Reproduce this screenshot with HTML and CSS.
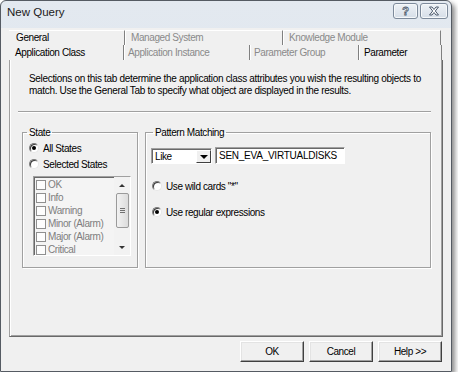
FILE: index.html
```html
<!DOCTYPE html>
<html lang="en">
<head>
	<meta charset="UTF-8">
	<title>New Query</title>
	<link rel="stylesheet" href="styles.css">
</head>
<body>
	<div class="window">
		<div class="titlebar">
			<span class="title">New Query</span>
			<div class="capbtns">
				<span class="capbtn help">?</span>
				<span class="capbtn close">
					<svg width="12" height="10" viewBox="0 0 12 10"><path d="M1.5 1 L4 1 L6 3.5 L8 1 L10.5 1 L7.3 5 L10.5 9 L8 9 L6 6.5 L4 9 L1.5 9 L4.7 5 Z" fill="#fff" stroke="#4d5b6e" stroke-width="1" stroke-linejoin="round"/></svg>
				</span>
			</div>
		</div>
		<div class="client">
			<div class="tabs">
				<div class="tabrow">
					<span class="tab first" style="width:115px">General</span>
					<span class="tab off" style="width:158px">Managed System</span>
					<span class="tab off last" style="width:159px">Knowledge Module</span>
				</div>
				<div class="tabrow row2">
					<span class="tab first" style="width:114px">Application Class</span>
					<span class="tab off" style="width:126px">Application Instance</span>
					<span class="tab off" style="width:109px">Parameter Group</span>
					<span class="tab last" style="width:84px">Parameter</span>
				</div>
			</div>
			<div class="panel">
				<p class="intro">Selections on this tab determine the application class attributes you wish the resulting objects to<br>match. Use the General Tab to specify what object are displayed in the results.</p>
				<div class="sep"></div>
				<div class="groups">
					<fieldset class="group state">
						<legend>State</legend>
						<div class="opt first"><span class="radio on"></span>All States</div>
						<div class="opt"><span class="radio"></span>Selected States</div>
						<div class="listbox">
							<div class="items">
								<div class="item"><span class="chk"></span>OK</div>
								<div class="item"><span class="chk"></span>Info</div>
								<div class="item"><span class="chk"></span>Warning</div>
								<div class="item"><span class="chk"></span>Minor (Alarm)</div>
								<div class="item"><span class="chk"></span>Major (Alarm)</div>
								<div class="item"><span class="chk"></span>Critical</div>
							</div>
							<div class="scroll">
								<span class="arrow up"></span>
								<span class="thumb"><i></i><i></i><i></i></span>
								<span class="track"></span>
								<span class="arrow down"></span>
							</div>
						</div>
					</fieldset>
					<fieldset class="group pattern">
						<legend>Pattern Matching</legend>
						<div class="matchrow">
							<div class="select"><span class="val">Like</span><span class="drop"></span></div>
							<div class="textbox">SEN_EVA_VIRTUALDISKS</div>
						</div>
						<div class="opt wild"><span class="radio"></span>Use wild cards "*"</div>
						<div class="opt regex"><span class="radio on"></span>Use regular expressions</div>
					</fieldset>
				</div>
			</div>
			<div class="buttons">
				<span class="btn">OK</span>
				<span class="btn">Cancel</span>
				<span class="btn">Help &gt;&gt;</span>
			</div>
		</div>
	</div>
</body>
</html>
```

FILE: styles.css
```css
body{margin: 0;background: #fff;font-family: "Liberation Sans", Arial, sans-serif;font-size: 10px;letter-spacing: -0.4px;color: #000;}

.window{width: 450px;height: 370px;border: 1px solid #555b63;border-radius: 6px 6px 0 0;
	background: linear-gradient(#e3e9f0, #d9e1ea);
	box-shadow: 3px 3px 5px rgba(0,0,0,.45);
	display: flex;flex-direction: column;}

.titlebar{height: 27px;display: flex;align-items: flex-start;padding-left: 6px;}
.titlebar .title{font-size: 11.5px;letter-spacing: 0;line-height: 14px;margin-top: 4px;color: #1b1b1b;}
.capbtns{margin-left: auto;margin-top: 2px;margin-right: 3px;display: flex;gap: 2px;}
.capbtn{height: 14px;border: 1px solid #7d8a9b;border-radius: 3px;
	background: linear-gradient(#eef2f6, #d6dee8);
	display: flex;align-items: center;justify-content: center;box-shadow: inset 0 0 0 1px #f6f8fa;}
.capbtn.help{width: 23px;font-weight: bold;font-size: 11px;letter-spacing: 0;color: #fff;
	-webkit-text-stroke: 0.8px #4d5b6e;}
.capbtn.close{width: 26px;}

.client{flex: 1;background: #f0f0f0;padding: 2px 8px 0 8px;display: flex;flex-direction: column;}

.tabs{height: 30px;}
.tabrow{height: 15px;display: flex;}
.tab{height: 15px;line-height: 15px;box-sizing: border-box;padding-left: 6px;border-left: 1px solid #808080;
	box-shadow: inset 1px 0 #fff;white-space: nowrap;overflow: hidden;}
.tab.first{border-left: none;box-shadow: none;padding-left: 7px;}
.tab.last{border-right: 1px solid #808080;}
.tab.off{color: #8a8a8a;}
.tabrow:first-child .tab{border-top: 1px solid #fff;line-height: 14px;}
.row2 .tab{padding-left: 4px;line-height: 16px;}
.row2 .tab.first{padding-left: 6px;}
.row2 .tab.last{padding-left: 5px;}

.panel{height: 277px;box-sizing: border-box;border-left: 1px solid #a0a0a0;border-right: 1px solid #696969;
	border-bottom: 1px solid #696969;box-shadow: inset 1px 0 #fff, inset -1px -1px #a0a0a0;
	padding: 13px 11px 0 19px;}
.intro{margin: 0;line-height: 12px;letter-spacing: -0.32px;white-space: nowrap;}
.sep{height: 0;border-top: 1px solid #a0a0a0;border-bottom: 1px solid #fff;margin: 14px 0 0 -11px;}

.groups{display: flex;gap: 7px;height: 142px;margin: 13px 0 0 -7px;}
.group{margin: 0;padding: 0;border: 1px solid #a0a0a0;box-shadow: inset 1px 1px #fff, 1px 1px #fff;min-width: 0;}
.group legend{padding: 0 2px;margin-left: 4px;line-height: 13px;}
.state{width: 116px;box-sizing: border-box;flex: none;}
.pattern{flex: 1;}
.pattern legend{margin-left: 7px;}

.opt{height: 16px;display: flex;align-items: center;padding-left: 6px;}
.state .opt.first{margin-top: 1px;}
.radio{width: 10px;height: 10px;box-sizing: border-box;border-radius: 50%;margin-right: 4px;
	border: 1px solid;border-color: #7a7a7a #e6e6e6 #e6e6e6 #7a7a7a;background: #fff;
	box-shadow: inset 1px 1px #3c3c3c;display: flex;align-items: center;justify-content: center;}
.radio.on::after{content: "";width: 4px;height: 4px;border-radius: 50%;background: #000;}

.listbox{margin: 4px 0 0 10px;width: 98px;height: 80px;box-sizing: border-box;display: flex;
	border: 1px solid;border-color: #a0a0a0 #fff #fff #a0a0a0;box-shadow: inset 1px 1px #696969;
	background: #f4f4f4;overflow: hidden;}
.items{flex: 1;padding: 1px 0 0 2px;color: #7e7e7e;}
.item{height: 13px;display: flex;align-items: center;white-space: nowrap;}
.chk{width: 8px;height: 8px;border: 1px solid #8f8f8f;background: #fdfdfd;margin-right: 2px;flex: none;}
.scroll{width: 16px;display: flex;flex-direction: column;align-items: center;background: #f2f2f2;padding-top: 1px;}
.arrow{width: 16px;height: 15px;display: flex;align-items: center;justify-content: center;flex: none;}
.arrow.up::after{content: "";border: 3px solid transparent;border-bottom: 3px solid #333;border-top: 0;}
.arrow.down::after{content: "";border: 3px solid transparent;border-top: 3px solid #333;border-bottom: 0;}
.thumb{width: 11px;height: 33px;border: 1px solid #9a9a9a;border-radius: 2px;background: linear-gradient(90deg, #f2f2f2, #dcdcdc);
	display: flex;flex-direction: column;align-items: center;justify-content: center;gap: 1px;flex: none;}
.thumb i{width: 5px;height: 1px;background: #707070;}
.track{flex: 1;}

.matchrow{display: flex;gap: 3px;margin: 8px 0 0 5px;align-items: flex-start;}
.select{width: 61px;height: 16px;box-sizing: border-box;margin-top: 1px;display: flex;background: #fff;
	border: 1px solid;border-color: #a0a0a0 #fff #fff #a0a0a0;box-shadow: inset 1px 1px #696969;}
.select .val{flex: 1;padding: 1px 0 0 3px;line-height: 13px;}
.select .drop{width: 15px;height: 13px;margin-top: 1px;box-sizing: border-box;background: #f0f0f0;
	border: 1px solid;border-color: #fff #404040 #404040 #fff;display: flex;align-items: center;justify-content: center;}
.select .drop::after{content: "";border: 4px solid transparent;border-top: 4px solid #000;border-bottom: 0;}
.textbox{width: 130px;height: 17px;box-sizing: border-box;background: #fff;padding: 2px 0 0 3px;line-height: 12px;
	letter-spacing: -0.25px;white-space: nowrap;overflow: hidden;
	border: 1px solid;border-color: #a0a0a0 #fff #fff #a0a0a0;box-shadow: inset 1px 1px #696969;}
.opt.wild{margin-top: 14px;}
.opt.regex{margin-top: 10px;}

.buttons{display: flex;justify-content: flex-end;gap: 5px;padding: 4px 1px 0 0;}
.btn{width: 64px;height: 21px;box-sizing: border-box;display: flex;align-items: center;justify-content: center;
	border: 1px solid;border-color: #fff #404040 #404040 #fff;box-shadow: inset -1px -1px #a0a0a0, inset 1px 1px #e3e3e3;
	background: #f0f0f0;}
```
